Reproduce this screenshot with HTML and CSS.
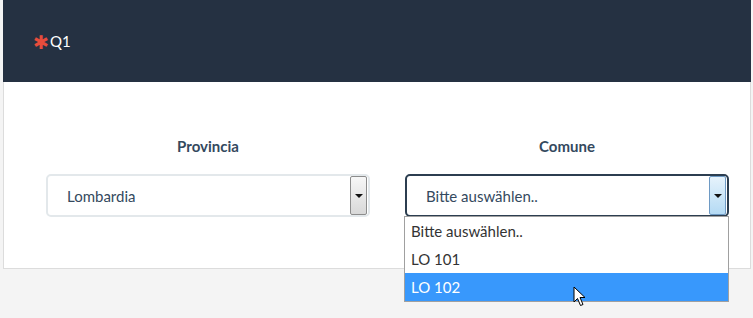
FILE: index.html
```html
<!DOCTYPE html>
<html lang="en">
<head>
    <meta charset="UTF-8">
    <meta name="viewport" content="width=device-width, initial-scale=1.0">
    <title>Q1</title>
    <link rel="stylesheet" href="styles.css">
</head>
<body>
    <div class="card">
        <div class="card-header">
            <span class="required">&#10033;</span>Q1
        </div>
        <div class="card-body">
            <div class="field">
                <label>Provincia</label>
                <div class="select">
                    <span class="value">Lombardia</span>
                    <span class="arrow"></span>
                </div>
            </div>
            <div class="field">
                <label>Comune</label>
                <div class="select open">
                    <span class="value">Bitte auswählen..</span>
                    <span class="arrow"></span>
                </div>
                <ul class="options">
                    <li>Bitte auswählen..</li>
                    <li>LO 101</li>
                    <li class="hover">LO 102</li>
                </ul>
                <svg class="cursor" width="14" height="21" viewBox="0 0 14 21">
                    <path d="M1 1 L1 16 L4.5 12.5 L7.5 19.5 L10 18.5 L7 11.5 L12 11.5 Z" fill="#fff" stroke="#000" stroke-width="1" stroke-linejoin="miter"/>
                </svg>
            </div>
        </div>
    </div>
</body>
</html>
```

FILE: styles.css
```css
html, body {
    min-height: 318px;
}
body {
    margin: 0;
    background-color: #f4f4f4;
    font-family: Lato, "Open Sans", sans-serif;
    color: #34495e;
}
.card {
    margin-left: 3px;
    width: 746px;
    background: white;
    border: 1px solid #dcdcdc;
    border-top: none;
}
.card-header {
    height: 82px;
    margin-left: -1px;
    margin-right: -1px;
    background-color: #253142;
    color: white;
    font-size: 15px;
    padding-left: 30px;
    display: flex;
    align-items: center;
}
.required {
    color: #e74c3c;
    font-size: 19px;
    line-height: 15px;
    margin-right: 1px;
}
.card-body {
    display: grid;
    grid-template-columns: 324px 324px;
    column-gap: 35px;
    padding: 55px 21px 51px 42px;
}
.field {
    position: relative;
    display: flex;
    flex-direction: column;
    align-items: center;
}
.field label {
    font-weight: bold;
    font-size: 15px;
    line-height: 18px;
    margin-bottom: 19px;
}
.select {
    box-sizing: border-box;
    width: 100%;
    height: 43px;
    border: 2px solid #e3e8eb;
    border-radius: 5px;
    display: flex;
    align-items: center;
    justify-content: space-between;
    padding: 0 1px 0 19px;
    font-size: 15px;
}
.select.open {
    border-color: #2c3e50;
}
.arrow {
    box-sizing: border-box;
    width: 17px;
    height: 39px;
    border: 1px solid #8c8c8c;
    border-radius: 2px;
    background: linear-gradient(#f7f7f7, #d8d8d8);
    position: relative;
}
.arrow::after {
    content: "";
    position: absolute;
    left: 4px;
    top: 17px;
    border-left: 4px solid transparent;
    border-right: 4px solid transparent;
    border-top: 4px solid #111;
}
.open .arrow {
    border-color: #6e9ac4;
    background: linear-gradient(#e6f3fc, #b4daf4);
}
.options {
    position: absolute;
    top: 79px;
    left: -1px;
    width: 325px;
    box-sizing: border-box;
    margin: 0;
    padding: 0;
    list-style: none;
    background: white;
    border: 1px solid #a0a0a0;
    font-size: 15px;
    color: #333;
    z-index: 2;
}
.options li {
    height: 28px;
    line-height: 28px;
    padding-left: 6px;
}
.options li.hover {
    background-color: #3898fc;
    color: white;
}
.cursor {
    position: absolute;
    left: 168px;
    top: 149px;
    z-index: 3;
}
```
